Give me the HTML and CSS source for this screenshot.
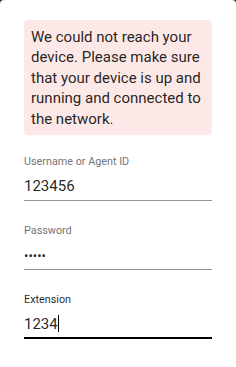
FILE: index.html
```html
<!DOCTYPE html>
<html lang="en">
<head>
  <meta charset="UTF-8">
  <title>Sign in</title>
  <link rel="stylesheet" href="styles.css">
</head>
<body>
  <div class="dialog">
    <div class="alert">
      We could not reach your device. Please make sure that your device is up and running and connected to the network.
    </div>

    <div class="field">
      <div class="label">Username or Agent ID</div>
      <div class="value">123456</div>
    </div>

    <div class="field">
      <div class="label">Password</div>
      <div class="value dots">&bull;&bull;&bull;&bull;&bull;</div>
    </div>

    <div class="field focused">
      <div class="label">Extension</div>
      <div class="value">1234<span class="caret"></span></div>
    </div>
  </div>
</body>
</html>
```

FILE: styles.css
```css
body {
  margin: 0;
  background-color: #2e2e2e;
  font-family: Roboto, "Liberation Sans", sans-serif;
  color: rgba(0, 0, 0, 0.87);
}

.dialog {
  background-color: #fff;
  border-radius: 4px 4px 0 0;
  min-height: 100vh;
  box-sizing: border-box;
  padding: 20px 24px;
}

.alert {
  background-color: #fce8e6;
  border-radius: 4px;
  padding: 7px 7px 6px;
  font-size: 15px;
  line-height: 20.4px;
}

.field {
  margin-top: 19px;
  padding-bottom: 2px;
  border-bottom: 1px solid #949494;
}

.field + .field {
  margin-top: 22px;
}

.label {
  font-size: 10.8px;
  line-height: 16px;
  color: #757575;
}

.value {
  margin-top: 4px;
  font-size: 15px;
  line-height: 24px;
}

.dots {
  font-size: 13px;
  padding-top: 2px;
  line-height: 22px;
}

.focused {
  padding-bottom: 1px;
  border-bottom: 2px solid #000;
}

.focused .label {
  color: rgba(0, 0, 0, 0.87);
}

.caret {
  display: inline-block;
  width: 1px;
  height: 17px;
  background-color: #000;
  vertical-align: -3px;
}
```
